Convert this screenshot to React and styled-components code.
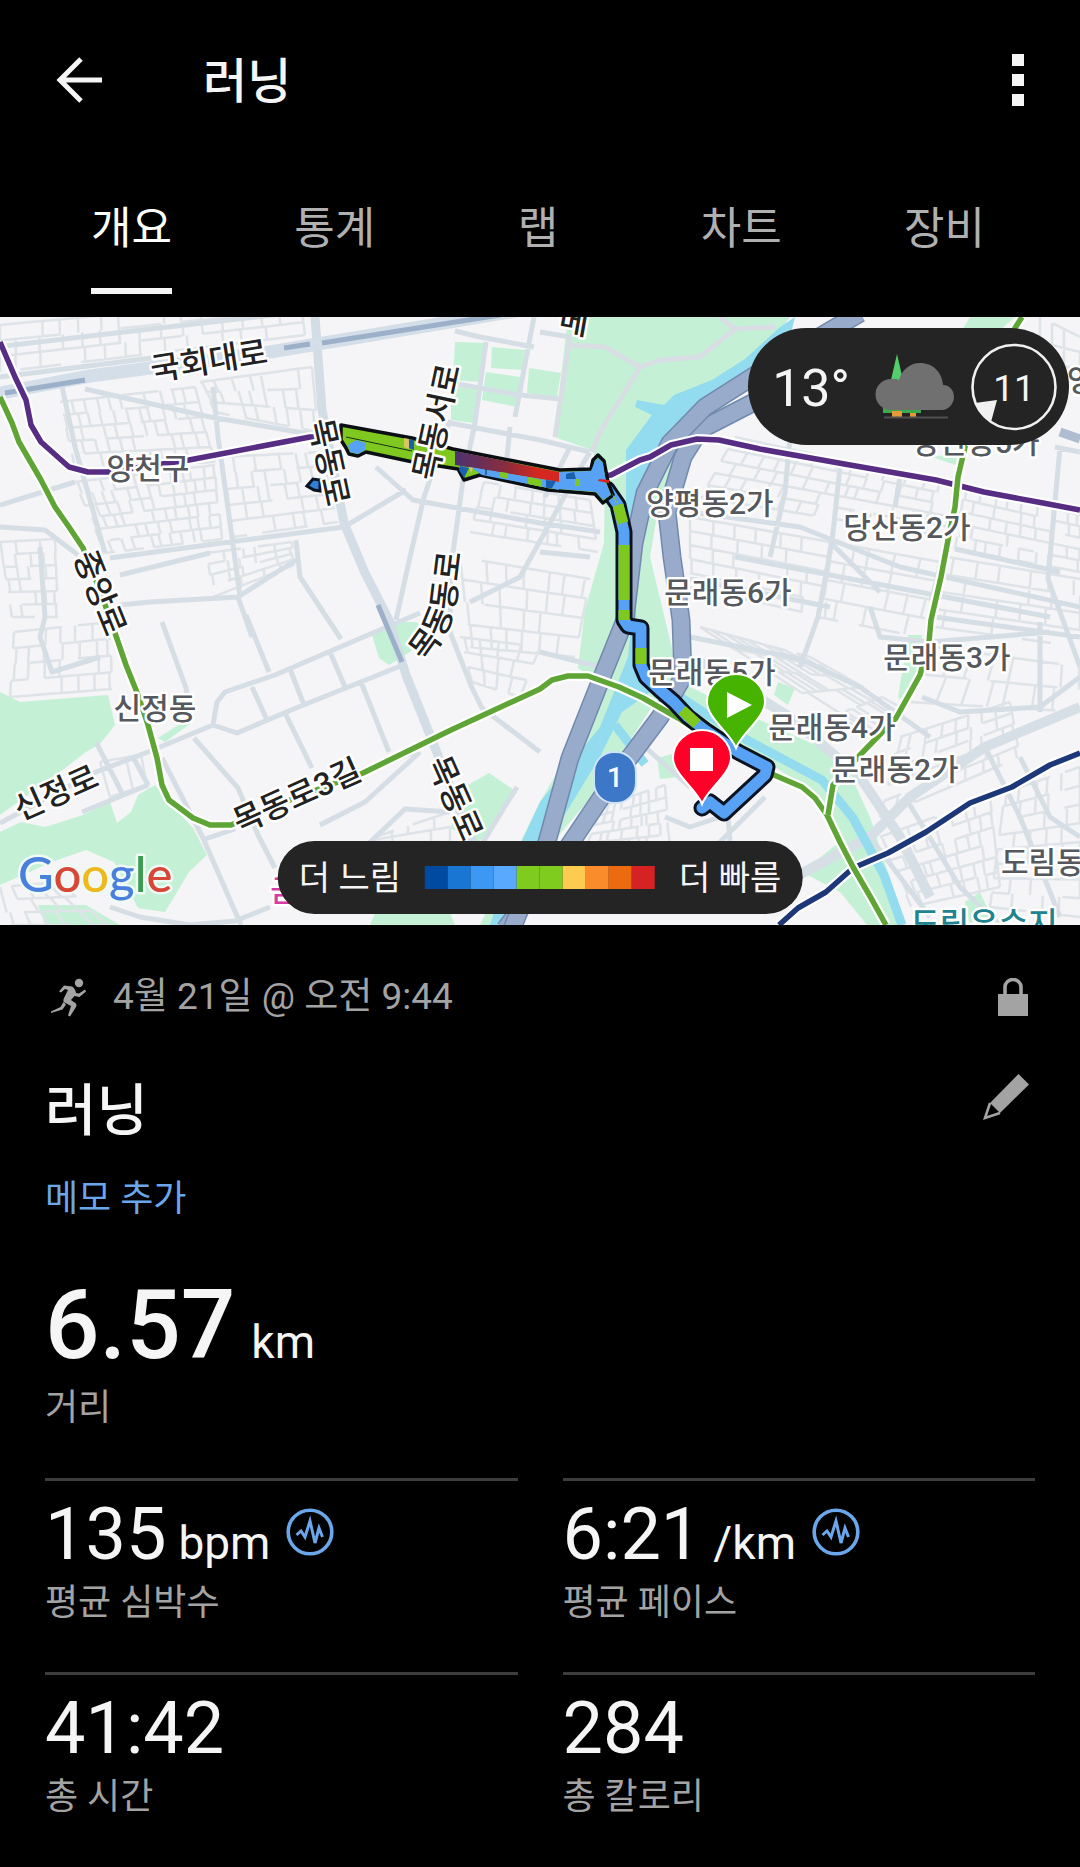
import React from 'react';
import styled, { createGlobalStyle } from 'styled-components';

const color = {
  text: '#f5f5f5',
  muted: '#a3a3a3',
  tab: '#b0b0b0',
  link: '#6ba6ea',
  rule: '#3d3d3d',
  pill: '#242424',
};

const fontStack = 'Roboto, "Noto Sans CJK KR", sans-serif';

const GlobalStyle = createGlobalStyle`
  *, *::before, *::after { box-sizing: border-box; }
  body {
    margin: 0;
    background: #000;
    color: ${color.text};
    font-family: ${fontStack};
  }
  h1, h2, dl, dd, dt, p { margin: 0; font: inherit; }
  button {
    margin: 0;
    padding: 0;
    border: 0;
    background: none;
    color: inherit;
    font: inherit;
    cursor: pointer;
  }
`;

/* ---------- header and tabs ---------- */

const Header = styled.header`
  display: flex;
  align-items: center;
  height: 160px;
  padding: 0 30px 0 47px;
`;

const IconButton = styled.button`
  display: flex;
  align-items: center;
  justify-content: center;
  flex: none;
  width: ${({ $size }) => $size || 64}px;
  height: ${({ $size }) => $size || 64}px;
`;

const ScreenTitle = styled.h1`
  flex: 1;
  margin-left: 92px;
  padding-top: 4px;
  font-size: 48px;
  line-height: 64px;
  font-weight: 500;
`;

const Tabs = styled.nav`
  display: flex;
  padding: 37px 34px 23px 30px;
`;

const Tab = styled.button`
  flex: 1;
  display: flex;
  justify-content: center;
  color: ${({ $active }) => ($active ? '#fff' : color.tab)};
`;

const TabLabel = styled.span`
  padding-bottom: 27px;
  border-bottom: 6px solid ${({ $active }) => ($active ? color.text : 'transparent')};
  font-size: 44px;
  line-height: 64px;
`;

/* ---------- map ---------- */

const MapFrame = styled.section`
  position: relative;
  width: 100%;
  aspect-ratio: 1080 / 608;
  overflow: hidden;
`;

const MapCanvas = styled.svg`
  display: block;
  width: 100%;
  height: 100%;
  font-family: ${fontStack};
`;

const AreaName = styled.text`
  font-size: ${({ $size }) => $size || 30}px;
  font-weight: 500;
  fill: ${({ $fill }) => $fill || '#55585c'};
  stroke: #fff;
  stroke-width: 5px;
  stroke-linejoin: round;
  paint-order: stroke;
  text-anchor: ${({ $anchor }) => $anchor || 'middle'};
`;

const RoadName = styled(AreaName)`
  font-size: 32px;
  fill: #222;
`;

const RouteNumber = styled.text`
  font-size: 28px;
  font-weight: 500;
  fill: #fff;
  text-anchor: middle;
`;

const GoogleMark = styled.text`
  font-family: Lato, sans-serif;
  font-size: 49px;
  font-weight: 500;
  stroke: #eefaf3;
  stroke-width: 5px;
  stroke-linejoin: round;
  paint-order: stroke;
`;

const WeatherPill = styled.div`
  position: absolute;
  top: 11px;
  right: 11px;
  display: flex;
  align-items: center;
  height: 117px;
  padding: 0 12px 0 24px;
  border-radius: 59px;
  background: ${color.pill};
`;

const Temperature = styled.span`
  font-size: 52px;
  line-height: 60px;
  padding-top: 4px;
  margin-right: 25px;
`;

const WindBadge = styled.span`
  position: relative;
  display: flex;
  align-items: center;
  justify-content: center;
  width: 86px;
  height: 88px;
  padding-top: 4px;
  margin-left: 16px;
  font-size: 37px;
  line-height: 44px;
`;

const WindDial = styled.svg`
  position: absolute;
  inset: 0;
`;

const PacePill = styled.div`
  position: absolute;
  left: 50%;
  bottom: 11px;
  transform: translateX(-50%);
  display: flex;
  align-items: center;
  gap: 24px;
  height: 73px;
  padding: 0 21px;
  border-radius: 37px;
  background: ${color.pill};
  font-size: 34px;
  line-height: 40px;
  white-space: nowrap;
`;

const PaceScale = styled.span`
  display: flex;
`;

const PaceStep = styled.span`
  width: 23px;
  height: 23px;
  background: ${({ $color }) => $color};
`;

/* ---------- details ---------- */

const Details = styled.main`
  padding: 44px 45px 40px;
`;

const MetaRow = styled.div`
  display: flex;
  align-items: center;
  height: 56px;
  color: ${color.muted};
`;

const MetaText = styled.p`
  flex: 1;
  margin-left: 20px;
  font-size: 37px;
  line-height: 44px;
`;

const TitleRow = styled.div`
  display: flex;
  align-items: flex-start;
  justify-content: space-between;
  margin-top: 44px;
  color: ${color.muted};
`;

const ActivityTitle = styled.h2`
  padding-top: 2px;
  color: ${color.text};
  font-size: 56px;
  line-height: 80px;
  font-weight: 500;
`;

const MemoButton = styled.button`
  display: block;
  margin-top: 24px;
  color: ${color.link};
  font-size: 36px;
  line-height: 48px;
`;

const Metric = styled.div`
  display: flex;
  flex-direction: column-reverse;
  justify-content: flex-end;
`;

const MainMetric = styled(Metric)`
  margin-top: 45px;
  height: 210px;
`;

const GridMetric = styled(Metric)`
  height: 194px;
  padding-top: 12px;
  border-top: 3px solid ${color.rule};
`;

const MetricGrid = styled.div`
  display: grid;
  grid-template-columns: 1fr 1fr;
  column-gap: 45px;
`;

const MetricValue = styled.dd`
  display: flex;
  align-items: baseline;
  white-space: pre;
  font-size: ${({ $large }) => ($large ? 96 : 72)}px;
  line-height: ${({ $large }) => ($large ? 114 : 84)}px;
  font-weight: ${({ $large }) => ($large ? 500 : 400)};
`;

const Unit = styled.span`
  margin-left: ${({ $gap }) => $gap || 12}px;
  font-size: 46px;
  line-height: 48px;
  font-weight: 400;
`;

const MetricLabel = styled.dt`
  color: ${color.muted};
  font-size: 36px;
  line-height: 52px;
`;

const BadgeButton = styled(IconButton)`
  align-self: center;
  margin: 0 0 6px 16px;
`;

/* ---------- icons ---------- */

const BackIcon = () => (
  <svg width="48" height="48" viewBox="0 0 48 48" fill="none" stroke="#f5f5f5" strokeWidth="5" aria-hidden="true">
    <path d="M47 24H5M26 3 5 24l21 21" />
  </svg>
);

const MoreIcon = () => (
  <svg width="12" height="52" viewBox="0 0 12 52" fill="#f5f5f5" aria-hidden="true">
    <path d="M0 0h12v12H0zM0 20h12v12H0zM0 40h12v12H0z" />
  </svg>
);

const RunnerIcon = () => (
  <svg width="48" height="48" viewBox="0 0 48 48" fill="currentColor" aria-hidden="true">
    <circle cx="34" cy="10" r="4.2" />
    <path d="M14 18.500 19 12.500 27 13.500Q30 15 31 20L34 20.500 40 16.500 41 18.500 34.500 24 29.500 23 26 27 31 30.500Q32 32 31 34L25 43.500 23 42.500 26 33 19.500 29.500Q17.500 28 19 25L23 17 20 16 16 19.500ZM18.500 29 21 31.500 17.500 36.500 6 40V38.500L15.500 34Z" />
  </svg>
);

const LockIcon = () => (
  <svg width="30" height="38" viewBox="0 0 30 38" aria-hidden="true">
    <path d="M0 16h30v22H0z" fill="currentColor" />
    <path d="M7 17V9a8 7.500 0 0 1 16 0v8" fill="none" stroke="currentColor" strokeWidth="3.600" />
  </svg>
);

const PencilIcon = () => (
  <svg width="48" height="48" viewBox="0 0 48 48" aria-hidden="true">
    <path d="M35.500 1 46 11.500 17 40 7 30Z" fill="currentColor" />
    <path d="M7 30 2 45l15-5" fill="none" stroke="currentColor" strokeWidth="2.600" />
  </svg>
);

const PulseIcon = () => (
  <svg width="48" height="48" viewBox="0 0 48 48" fill="none" stroke={color.link} aria-hidden="true">
    <circle cx="24" cy="24" r="21.800" strokeWidth="3.600" />
    <path d="m10.500 27 4.500-4 4 6 5-16 5 22 4-15 3.500 9" strokeWidth="3" />
  </svg>
);

const WeatherIcon = () => (
  <svg width="80" height="70" viewBox="0 0 80 70" role="img" aria-label="흐림">
    <path d="M22 2 28 28H16Z" fill="#52cf6b" />
    <path d="M8 56h38v5H8z" fill="#3fa94f" />
    <path d="M17 59h10v6H17zM35 61h6v4h-6z" fill="#e39a37" />
    <path d="M9 65.500h64" stroke="#505050" strokeWidth="2" />
    <path d="M16 58a15.500 15.500 0 0 1 0-31q5-1 8 1C27 17 36 11 45 11c13 0 22 9 23 22 7 0 11 6 11 12s-5 13-12 13Z" fill="#707070" />
  </svg>
);

/* ---------- map drawing ---------- */

// Small deterministic noise so side streets look irregular but never change.
const noise = (n) => {
  const v = Math.sin(n * 127.1) * 43758.5453;
  return v - Math.floor(v);
};

// Street mesh inside a quad given as [topLeft, topRight, bottomRight, bottomLeft].
const mesh = ([a, b, c, d], cols, rows, seed) => {
  const at = (u, v) => {
    const x = (1 - v) * ((1 - u) * a[0] + u * b[0]) + v * ((1 - u) * d[0] + u * c[0]);
    const y = (1 - v) * ((1 - u) * a[1] + u * b[1]) + v * ((1 - u) * d[1] + u * c[1]);
    return `${x.toFixed(1)} ${y.toFixed(1)}`;
  };
  let path = '';
  for (let r = 0; r <= rows; r += 1) {
    for (let k = 0; k < cols; k += 1) {
      if (noise(seed + r * 31 + k) > 0.2) path += `M${at(k / cols, r / rows)}L${at((k + 1) / cols, r / rows)}`;
    }
  }
  for (let r = 0; r < rows; r += 1) {
    for (let k = 0; k <= cols; k += 1) {
      const shift = (noise(seed + r * 17 + k * 5) - 0.5) * 0.5;
      const u = Math.min(1, Math.max(0, (k + shift) / cols));
      if (noise(seed + 400 + r * 13 + k) > 0.22) path += `M${at(u, r / rows)}L${at(u, (r + 1) / rows)}`;
    }
  }
  return path;
};

const blocks = [
  mesh([[0, 8], [300, -20], [305, 18], [0, 55]], 15, 3, 1),
  mesh([[60, 85], [195, 70], [215, 145], [75, 150]], 11, 5, 2),
  mesh([[200, 65], [312, 50], [318, 115], [215, 95]], 7, 3, 3),
  mesh([[75, 165], [215, 148], [222, 222], [105, 236]], 12, 6, 4),
  mesh([[222, 140], [322, 135], [338, 205], [232, 220]], 7, 5, 5),
  mesh([[0, 225], [55, 222], [58, 300], [12, 300]], 4, 6, 6),
  mesh([[14, 315], [110, 305], [112, 372], [10, 380]], 6, 4, 7),
  mesh([[207, 236], [292, 225], [294, 248], [213, 280]], 5, 4, 8),
  mesh([[484, 165], [590, 183], [598, 235], [470, 215]], 7, 4, 9),
  mesh([[460, 240], [590, 262], [575, 340], [470, 330]], 6, 4, 10),
  mesh([[735, 120], [955, 168], [945, 220], [700, 180]], 13, 5, 11),
  mesh([[690, 200], [830, 225], [825, 300], [690, 270]], 6, 5, 12),
  mesh([[830, 225], [940, 245], [920, 320], [818, 300]], 5, 4, 13),
  mesh([[965, 170], [1080, 198], [1080, 255], [955, 232]], 8, 5, 14),
  mesh([[948, 240], [1080, 262], [1080, 330], [935, 310]], 5, 4, 15),
  mesh([[700, 310], [810, 340], [900, 390], [870, 420]], 9, 5, 16),
  mesh([[935, 330], [1080, 350], [1080, 395], [910, 385]], 7, 2, 17),
  mesh([[900, 420], [1010, 385], [1020, 440], [880, 500]], 8, 5, 18),
  mesh([[880, 520], [990, 480], [1000, 570], [910, 590]], 8, 6, 19),
  mesh([[1005, 475], [1080, 450], [1080, 600], [990, 590]], 5, 8, 20),
  mesh([[600, 490], [665, 468], [670, 530], [585, 535]], 8, 5, 21),
  mesh([[0, 570], [60, 565], [110, 608], [10, 608]], 5, 3, 23),
  mesh([[460, 320], [540, 330], [520, 380], [472, 365]], 4, 3, 24),
  mesh([[100, 445], [145, 437], [150, 467], [110, 480]], 2, 1, 25),
  mesh([[375, 520], [450, 495], [450, 525], [375, 525]], 4, 2, 26),
  mesh([[1040, 0], [1080, 20], [1080, 50], [1040, 50]], 3, 2, 27),
].join('');

const avenues = [
  'M-5 30 150 12 300 -5', 'M0 60 160 40', 'M85 72 210 100 310 117', 'M213 70 218 120 232 220 240 280',
  'M110 241 207 228 344 210 406 173', 'M0 210 45 213 78 238', 'M376 150 413 183 540 206 600 215',
  'M450 103 424 180 410 240 396 303', 'M486 25 475 106 463 163 451 250 450 315 472 371 482 391 540 435',
  'M455 14 480 20 534 30', 'M451 66 520 78 560 82', 'M450 106 540 123 590 135', 'M534 0 515 100', 'M540 15 570 20',
  'M590 135 575 160 545 215 520 260 470 285', 'M510 110 505 160', 'M570 130 545 180',
  'M0 506 96 455 148 435 213 408 217 385 225 375 275 358 382 312 420 296', 'M213 408 237 416 296 391 403 348',
  'M82 495 148 468', 'M96 425 124 480', 'M133 440 148 468', 'M162 305 186 371 190 405', 'M246 298 269 355',
  'M296 223 300 260 341 322', 'M286 398 312 451', 'M361 365 389 435', 'M330 335 345 370', 'M252 370 268 405',
  'M290 352 304 388', 'M194 421 238 471 258 518 275 551', 'M162 441 203 521 241 608', 'M205 522 235 512',
  'M120 288 150 285 238 280 296 243', 'M120 258 210 236', 'M238 280 252 320', 'M60 60 75 130 105 236',
  'M0 188 75 165', 'M40 230 45 300 40 320 52 355 100 340', 'M363 456 415 435', 'M320 508 365 485 420 435',
  'M190 608 235 604 270 590', 'M110 590 140 600 190 608', 'M365 530 405 492 450 495', 'M517 470 480 530',
  'M690 195 800 210 900 250 1080 290', 'M735 240 830 258 1050 300', 'M690 262 830 290', 'M840 150 832 225 818 300 800 350',
  'M830 225 880 275', 'M1055 130 1080 135', 'M1060 130 1048 262 1080 350', 'M955 232 1060 255', 'M900 160 895 190',
  'M790 120 785 175 770 240', 'M690 320 800 342 860 370 930 420', 'M870 290 880 320 930 325 1050 315',
  'M922 380 960 395 1040 390 1080 360', 'M1040 305 1040 395', 'M935 300 1080 320', 'M985 430 1020 500 1060 600',
  'M870 520 930 600', 'M905 480 960 570 1000 608', 'M1020 440 1050 500 1080 520', 'M540 235 590 240',
  'M540 335 600 350', 'M645 430 690 470', 'M665 500 690 510 720 500', 'M728 500 730 524', 'M765 480 700 545',
];

const parks = [
  'M568 0H790L745 60 700 127 678 146 660 180 650 240 664 298 680 365 733 391 842 440 870 500 905 608H868L850 540 820 480 760 440 690 410 655 385 600 470 540 540 500 608H480L540 485 571 431 598 365 578 351 585 293 604 226 605 166 592 133 554 120Z',
  'M0 375 20 385 108 378 115 408 100 427 86 435 60 455 0 498Z',
  'M0 515 21 505 45 510 83 498 110 485 117 506 131 495 138 478 155 468 169 485 193 511 207 538 189 555 165 595 138 591 114 545 86 533 52 545 0 568Z',
  'M38 588H86L120 608H45Z', 'M158 421 180 407H190L165 425Z',
  'M372 318 396 305H417L427 318 410 335 389 348 379 341Z', 'M468 468 489 456 517 475 496 505 479 525 450 511Z',
  'M455 25 486 26 480 65 453 63Z', 'M492 30 525 33 523 53 491 51Z', 'M486 55 520 60 517 90 482 83Z',
  'M451 70 479 71 474 106 451 103Z', 'M529 51 561 56 557 80 527 76Z',
  'M802 555 857 511 862 515 850 558 885 581 902 608H867L840 575Z', 'M908 318H922L912 385 898 381Z',
  'M778 365 795 371 788 388 774 378Z', 'M657 441 680 435 695 458 660 462Z', 'M970 0H1015L1000 13H962Z',
  'M932 140 957 136 956 148Z', 'M965 585 980 575 995 608H970Z', 'M375 596H450L455 608H370Z',
];

const purpleLine = 'M0 25 15 60 26 83 31 108 41 125 69 150 88 155 108 155 189 143 310 120 350 120 455 142 560 162 611 158 640 143 650 140 671 128 697 122 719 123 760 132 850 148 936 163 984 175 1043 186 1080 193';
const greenLine = 'M0 80 12 106 19 125 41 163 55 190 69 210 83 231 101 276 115 316 126 348 138 378 148 408 157 441 162 468 169 483 193 501 210 508 231 508 297 480 363 456 451 413 540 372 552 363 568 359 588 359 619 370 643 381 678 401 700 415 774 458 802 470 815 481 827 498 840 525 853 550 871 581 886 608';
const greenBranch = 'M1022 0 1015 11 965 130 958 160 955 190 948 223 941 260 931 303 929 325 920 358 905 385 896 401 860 438 833 468 828 498';
const navyLine = 'M779 608 798 591 826 575 853 551 888 536 926 515 970 486 1012 470 1050 448 1080 436';
const riverRoadWest = 'M860 -4 760 55 705 90 670 126 645 176 634 226 625 303 600 365 570 441 547 525 512 612';
const riverRoadEast = 'M760 82 700 113 683 140 667 195 672 240 681 303 683 360 660 400 615 460 568 530 505 612';

const railLines = [
  { d: purpleLine, stroke: '#562d82' },
  { d: navyLine, stroke: '#1d3878' },
  { d: greenLine, stroke: '#5fa535' },
  { d: greenBranch, stroke: '#5fa535' },
];

const routeSouth = 'M607 172 618 188 624 215V303L628 309 641 311V348L646 360 660 373 674 385 688 400 705 413 738 435 767 450 765 458 724 496 710 485 702 491';
const routeGreenParts = 'M618 188 623 206M624 228V283M624 293V303M641 331V347M682 393 697 407';
const routeBand = 'M341 108 412 121 453 132 560 153 591 152 593 143 598 138 604 144 608 165 613 178 603 186 595 177 548 173 480 158 464 163 458 152 413 145 366 135 358 139 349 137 346 131 341 123Z';

const areaNames = [
  ['양천구', 148, 162], ['신정동', 155, 402], ['양평동2가', 710, 197], ['당산동2가', 907, 221],
  ['문래동6가', 728, 286], ['당산동5가', 976, 136], ['문래동5가', 712, 366], ['문래동3가', 947, 351],
  ['문래동4가', 832, 421], ['문래동2가', 895, 463],
];

const roadNames = [
  ['국회대로', 209, 44, -9], ['목동로', 329, 145, 78], ['목동서로', 437, 105, -78], ['중앙로', 100, 276, 68],
  ['신정로', 56, 476, -24], ['목동로3길', 297, 479, -24], ['목동로', 455, 481, 66], ['메', 574, 5, 10],
];

const googleLetters = [
  ['G', '#4a80dd'], ['o', '#d6473a'], ['o', '#edb91f'], ['g', '#4a80dd'], ['l', '#3d9c52'], ['e', '#d6473a'],
];

const Pin = ({ x, y, fill, children }) => (
  <g transform={`translate(${x} ${y})`}>
    <path
      d="M0 0C-5-14-29-30-29-46A29 28 0 0 1 29-46C29-30 5-14 0 0Z"
      fill={fill}
      stroke="#fff"
      strokeWidth="2"
    />
    <g fill="#fff">{children}</g>
  </g>
);

const RouteMap = () => (
  <MapCanvas viewBox="0 0 1080 608" preserveAspectRatio="xMidYMid slice" role="img" aria-label="러닝 경로 지도">
    <defs>
      <linearGradient id="sprint" x1="0" x2="1">
        <stop offset="0" stopColor="#4d3270" />
        <stop offset="0.5" stopColor="#8c2c3c" />
        <stop offset="0.8" stopColor="#d5271f" />
      </linearGradient>
      <path id="mokdongdong" d="M425 345Q449 318 455 286L463 220" />
    </defs>
    <rect width="1080" height="608" fill="#f5f4f6" />
    <path d={parks.join('')} fill="#c4f1d6" />
    <g fill="none" strokeLinejoin="round">
      <path d={blocks} stroke="#dee3e8" strokeWidth="2.500" />
      <path d={avenues.join('')} stroke="#d6dee5" strokeWidth="5" />
      <path d="M568 28 605 30 640 50 660 43 700 40 735 12M640 50 600 115 592 135M570 20 555 120M720 0 735 12 775 10" stroke="#d8dee4" strokeWidth="5" />
      <path d="M315 0 317 27 322 93 344 206 365 256 389 303 406 358 430 418 462 500 480 540" stroke="#d3dde5" strokeWidth="9" />
      <path d="M795 560 870 520 910 480 985 430 1080 390M700 345 790 400 860 460 900 520 930 580" stroke="#d6dfe6" strokeWidth="10" />
      <path d="M1060 115 1080 122" stroke="#aebdd0" strokeWidth="9" />
      <path d="M-5 77 90 59 270 35 540 -10" stroke="#d3dee8" strokeWidth="13" />
      <path d="M5 76 85 63M284 31 310 27M322 26 500 -2M378 288 402 345" stroke="#9db0ca" strokeWidth="5" />
    </g>
    <path d="M795 0 780 10 745 42 712 63 674 78 664 88 637 83 635 90 652 98 626 133 626 200 640 200 652 140 672 110 705 88 760 60 790 20ZM634 280 628 340 600 410 540 485 505 560 490 608H512L545 530 600 440 622 395 665 365 650 345 640 330Z" fill="#93dbee" />
    <path d="M648 358 680 380 747 423 822 463 853 501 884 558 902 608M615 408 645 447" fill="none" stroke="#93dbee" strokeWidth="9" />
    {[riverRoadEast, riverRoadWest].map((d) => (
      <g key={d} fill="none" strokeLinejoin="round">
        <path d={d} stroke="#7189ae" strokeWidth="19" />
        <path d={d} stroke="#98abca" strokeWidth="16" />
      </g>
    ))}
    {railLines.map(({ d, stroke }) => (
      <g key={d} fill="none" strokeLinejoin="round">
        <path d={d} stroke="#fff" strokeWidth="10" />
        <path d={d} stroke={stroke} strokeWidth="5.500" />
      </g>
    ))}

    <g fill="none" strokeLinejoin="round" strokeLinecap="round">
      <path d={routeSouth} stroke="#0b1320" strokeWidth="17" />
      <path d={routeSouth} stroke="#58a2f6" strokeWidth="11" />
      <path d={routeGreenParts} stroke="#7fc81f" strokeWidth="11" strokeLinecap="butt" />
    </g>
    <path d={routeBand} fill="#7fc81f" stroke="#0b0f14" strokeWidth="3.500" strokeLinejoin="round" />
    <path d="M455 134 559 155V165L455 148Z" fill="url(#sprint)" />
    <path d="M470 150 559 165V173L482 158ZM559 155 591 154 595 144 598 141 603 146 606 166 611 178 603 183 596 175 559 172ZM348 128 356 123 366 126 365 133 358 137 350 135Z" fill="#58a2f6" />
    <path d="M500 155 508 156V162L500 160ZM528 160 542 163V170L528 167ZM575 162H580V169H575ZM570 157H575V161H570ZM612 176 620 190 614 182Z" fill="#7fc81f" />
    <path d="M409 122 414 123V133L408 131ZM460 149 469 151 464 161 459 153ZM546 163 556 164 552 171H546ZM566 157 574 155 576 162H566Z" fill="#1b5faf" />
    <path d="M404 121 409 122V132L404 130ZM469 150 473 151 471 156Z" fill="#d5c860" />
    <path d="M599 162 609 163V166L598 164Z" fill="#d5271f" />
    <path d="M346 120 412 134M486 152V158" stroke="#17301a" strokeWidth="1" />
    <path d="M307 169 313 162 320 163V174L314 173Z" fill="#2f7fd6" stroke="#0b1320" strokeWidth="3" />

    {areaNames.map(([name, x, y]) => (
      <AreaName key={name} x={x} y={y}>{name}</AreaName>
    ))}
    <AreaName x="1067" y="74" $anchor="start">영</AreaName>
    <AreaName x="1001" y="556" $anchor="start">도림동</AreaName>
    <AreaName x="984" y="618" $fill="#1f8390" $size={32}>도림유수지</AreaName>
    <AreaName x="284" y="584" $fill="#d63aa4">금</AreaName>
    {roadNames.map(([name, x, y, angle]) => (
      <RoadName key={`${name}${x}`} dy="11" transform={`translate(${x} ${y}) rotate(${angle})`}>{name}</RoadName>
    ))}
    <RoadName $anchor="start">
      <textPath href="#mokdongdong">목동동로</textPath>
    </RoadName>

    <rect x="594" y="435" width="42" height="51" rx="20" fill="#3d78c8" stroke="#cfe3fa" strokeWidth="2" />
    <RouteNumber x="615" y="470">1</RouteNumber>
    <Pin x={736} y={431} fill="#45b300"><path d="M-9-56 16-43-9-30Z" /></Pin>
    <Pin x={702} y={487} fill="#ff0028"><path d="M-12-56H11V-33H-12Z" /></Pin>
    <GoogleMark x="18" y="575">
      {googleLetters.map(([letter, fill], i) => (
        <tspan key={i} fill={fill}>{letter}</tspan>
      ))}
    </GoogleMark>
  </MapCanvas>
);

/* ---------- screen ---------- */

const tabs = ['개요', '통계', '랩', '차트', '장비'];

const paceColors = [
  '#004ba0', '#1976d2', '#3d98f4', '#58a9ff', '#7fcb1e', '#7fcb1e', '#fccb4f', '#fb8c2b', '#ec6a10', '#d62222',
];

const metrics = [
  { label: '평균 심박수', value: '135', unit: 'bpm', badge: true },
  { label: '평균 페이스', value: '6:21', unit: '/km', badge: true },
  { label: '총 시간', value: '41:42' },
  { label: '총 칼로리', value: '284' },
];

export default function App() {
  return (
    <>
      <GlobalStyle />
      <Header>
        <IconButton aria-label="뒤로"><BackIcon /></IconButton>
        <ScreenTitle>러닝</ScreenTitle>
        <IconButton aria-label="더 보기"><MoreIcon /></IconButton>
      </Header>
      <Tabs>
        {tabs.map((name, i) => (
          <Tab key={name} type="button" $active={i === 0}>
            <TabLabel $active={i === 0}>{name}</TabLabel>
          </Tab>
        ))}
      </Tabs>

      <MapFrame>
        <RouteMap />
        <WeatherPill>
          <Temperature>13°</Temperature>
          <WeatherIcon />
          <WindBadge>
            <WindDial width="86" height="88" viewBox="0 0 86 88" aria-hidden="true">
              <ellipse cx="43" cy="44" rx="41.500" ry="42" fill="none" stroke="#f0f0f0" strokeWidth="2.600" />
              <path d="M4 60 26 57 20 79Q8 72 4 60Z" fill="#f0f0f0" />
            </WindDial>
            11
          </WindBadge>
        </WeatherPill>
        <PacePill>
          <span>더 느림</span>
          <PaceScale>
            {paceColors.map((c, i) => <PaceStep key={i} $color={c} />)}
          </PaceScale>
          <span>더 빠름</span>
        </PacePill>
      </MapFrame>

      <Details>
        <MetaRow>
          <RunnerIcon />
          <MetaText>4월 21일 @ 오전 9:44</MetaText>
          <IconButton $size={44} aria-label="비공개"><LockIcon /></IconButton>
        </MetaRow>
        <TitleRow>
          <ActivityTitle>러닝</ActivityTitle>
          <IconButton $size={56} aria-label="이름 편집"><PencilIcon /></IconButton>
        </TitleRow>
        <MemoButton>메모 추가</MemoButton>

        <dl>
          <MainMetric>
            <MetricLabel>거리</MetricLabel>
            <MetricValue $large>6.57<Unit $gap={16}>km</Unit></MetricValue>
          </MainMetric>
          <MetricGrid>
            {metrics.map(({ label, value, unit, badge }) => (
              <GridMetric key={label}>
                <MetricLabel>{label}</MetricLabel>
                <MetricValue>
                  {value}
                  {unit && <Unit>{unit}</Unit>}
                  {badge && <BadgeButton $size={48} aria-label={`${label} 도움말`}><PulseIcon /></BadgeButton>}
                </MetricValue>
              </GridMetric>
            ))}
          </MetricGrid>
        </dl>
      </Details>
    </>
  );
}
